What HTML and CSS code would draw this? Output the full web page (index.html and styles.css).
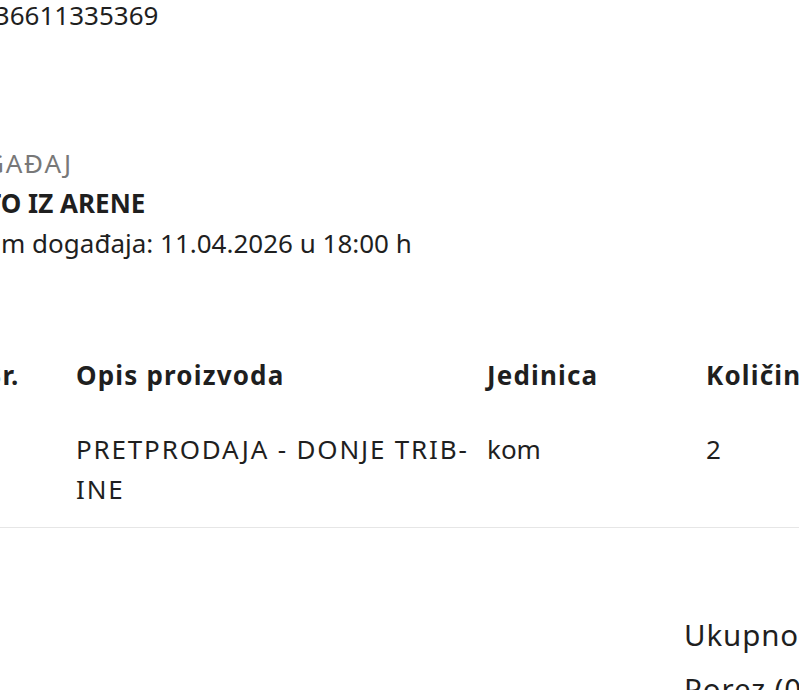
FILE: index.html
```html
<!DOCTYPE html>
<html lang="hr">
<head>
    <meta charset="UTF-8">
    <meta name="viewport" content="width=device-width, initial-scale=1.0">
    <title>Račun</title>
    <link rel="stylesheet" href="styles.css">
</head>
<body>
    <div class="page">
        <div class="header-line">OIB 36611335369</div>

        <div class="event">
            <div class="event-label caps">DOGAĐAJ</div>
            <div class="event-name">MOTO IZ ARENE</div>
            <div class="event-date">Datum događaja: 11.04.2026 u 18:00 h</div>
        </div>

        <table class="items">
            <thead>
                <tr>
                    <th class="col-no">Br.</th>
                    <th class="col-desc">Opis proizvoda</th>
                    <th class="col-unit">Jedinica</th>
                    <th class="col-qty">Količina</th>
                </tr>
            </thead>
            <tbody>
                <tr>
                    <td class="col-no">1</td>
                    <td class="col-desc caps">PRETPRODAJA - DONJE TRIB&shy;INE</td>
                    <td class="col-unit">kom</td>
                    <td class="col-qty">2</td>
                </tr>
            </tbody>
        </table>

        <div class="summary">
            <div class="totals">
                <div class="total-row total-sum">Ukupno (bez poreza)</div>
                <div class="total-row">Porez (0%)</div>
            </div>
        </div>
    </div>
</body>
</html>
```

FILE: styles.css
```css
body {
    margin: 0;
    overflow: hidden;
    background-color: #fff;
    color: #1f1f1f;
    font-family: "Noto Sans", Lato, sans-serif;
    font-size: 26px;
    line-height: 40px;
}
.page {
    margin-left: -58px;
    margin-top: -5px;
    width: 1100px;
}
.caps {
    letter-spacing: 0.07em;
}
.event {
    margin-top: 108px;
}
.event-label {
    color: #787878;
}
.event-name {
    font-weight: bold;
}
.items {
    margin-top: 76px;
    margin-left: 42px;
    width: 1000px;
    border-collapse: collapse;
    table-layout: fixed;
}
.items th,
.items td {
    text-align: left;
    vertical-align: top;
    padding: 16px 10px 16px 0;
}
.items th {
    font-weight: bold;
    letter-spacing: 0.045em;
}
.items td {
    padding-top: 18px;
    padding-bottom: 18px;
    hyphens: manual;
}
.items tbody tr {
    border-bottom: 1px solid #e6e6e6;
}
.col-no { width: 82px; }
.col-desc { width: 401px; }
.col-unit { width: 209px; }
.summary {
    margin-top: 80px;
    padding-left: 742px;
}
.total-row {
    font-size: 29.5px;
    line-height: 46px;
    padding: 4px 0;
    letter-spacing: 0.03em;
}
```
